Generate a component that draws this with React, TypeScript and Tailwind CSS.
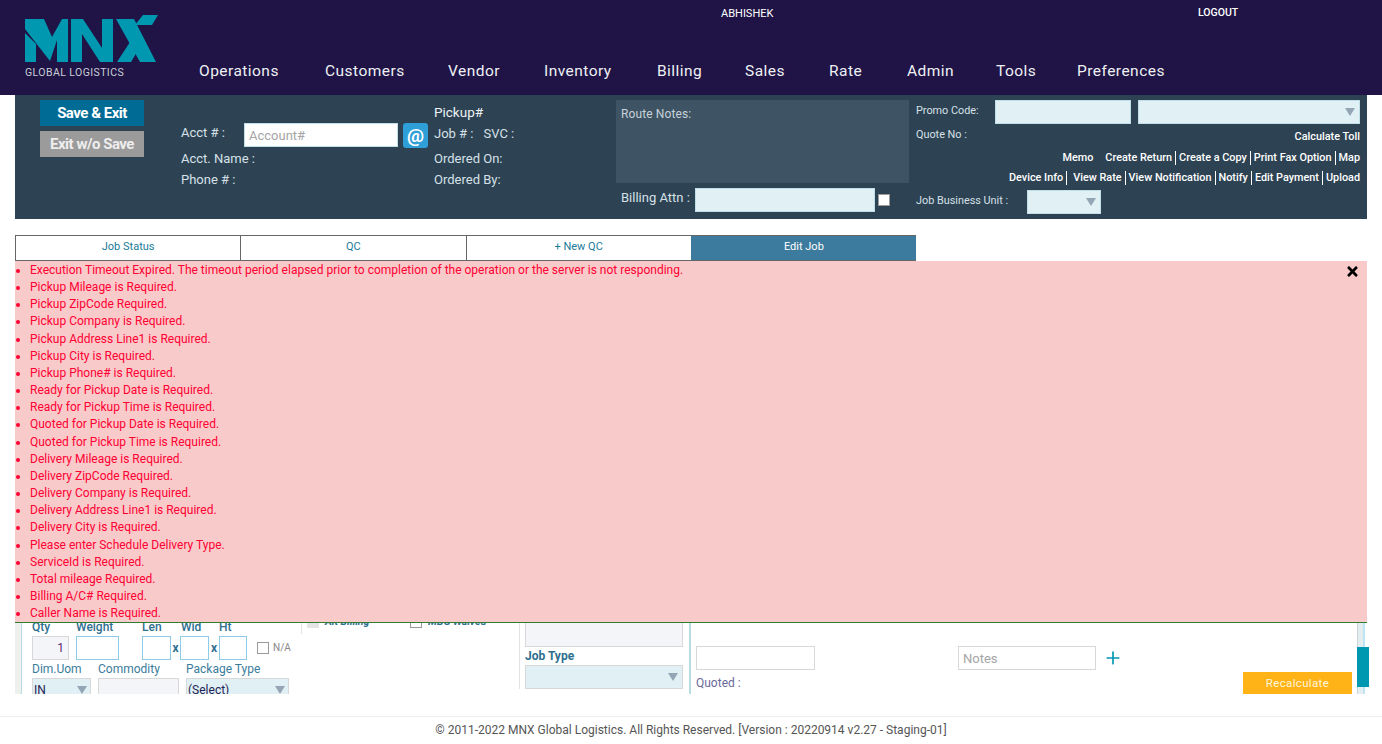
import { Plus } from "lucide-react";
import { FaTimes } from "react-icons/fa";

const navItems = [
  { label: "Operations", width: "w-[82px]" },
  { label: "Customers", width: "w-[79px]" },
  { label: "Vendor", width: "w-[52px]" },
  { label: "Inventory", width: "w-[69px]" },
  { label: "Billing", width: "w-[44px]" },
  { label: "Sales", width: "w-[40px]" },
  { label: "Rate", width: "w-[34px]" },
  { label: "Admin", width: "w-[45px]" },
  { label: "Tools", width: "w-[37px]" },
  { label: "Preferences", width: "w-[91px]" },
];

const errors = [
  "Execution Timeout Expired. The timeout period elapsed prior to completion of the operation or the server is not responding.",
  "Pickup Mileage is Required.",
  "Pickup ZipCode Required.",
  "Pickup Company is Required.",
  "Pickup Address Line1 is Required.",
  "Pickup City is Required.",
  "Pickup Phone# is Required.",
  "Ready for Pickup Date is Required.",
  "Ready for Pickup Time is Required.",
  "Quoted for Pickup Date is Required.",
  "Quoted for Pickup Time is Required.",
  "Delivery Mileage is Required.",
  "Delivery ZipCode Required.",
  "Delivery Company is Required.",
  "Delivery Address Line1 is Required.",
  "Delivery City is Required.",
  "Please enter Schedule Delivery Type.",
  "ServiceId is Required.",
  "Total mileage Required.",
  "Billing A/C# Required.",
  "Caller Name is Required.",
];

const tabs = ["Job Status", "QC", "+ New QC"];

const linksTop = ["Create Return", "Create a Copy", "Print Fax Option"];
const linksBottom = ["View Rate", "View Notification", "Notify", "Edit Payment"];

const Caret = ({ className = "" }: { className?: string }) => (
  <span className={`block h-0 w-0 border-x-[5px] border-t-[8px] border-x-transparent border-t-[#94a5b5] ${className}`} />
);

const Logo = () => (
  <svg viewBox="25 15 134 47" className="block h-[47px] w-[134px]" fill="#0097b0">
    <path d="M25 19H44L52 37L62 19H68V62H57V40L50 61L25 29Z" />
    <path d="M25 33L36 44V62H25Z" />
    <path d="M71 19H83L102 48V19H113V62H100L82 34V62H71Z" />
    <path d="M116 19H134L156 62H140Z" />
    <path d="M117 62L130 42L137 52L131 62Z" />
    <path d="M143 15H158L152 25H135Z" />
  </svg>
);

export default function App() {
  return (
    <div className="flex min-h-[744px] flex-col bg-white font-['Roboto',sans-serif]">
      <header className="flex h-[95px] bg-[#1f1445]">
        <div className="ml-[25px] w-[174px] pt-[15px]">
          <Logo />
          <div className="mt-[4px] pt-[1px] text-[10.5px] leading-[12px] tracking-[0.04em] text-[#c9cdd6]">GLOBAL LOGISTICS</div>
        </div>
        <div className="flex flex-1 flex-col">
          <div className="flex h-[24px] pt-[6px] text-[11px] leading-[13px] text-white">
            <span className="ml-[522px] w-[477px] pt-[1px]">ABHISHEK</span>
            <span className="text-[10.5px] font-medium">LOGOUT</span>
          </div>
          <nav className="mt-[37px] flex gap-[44px] text-[15.5px] leading-[20px] tracking-[0.03em] text-[#eef0f4]">
            {navItems.map((item) => (
              <span key={item.label} className={`${item.width} whitespace-nowrap`}>
                {item.label}
              </span>
            ))}
          </nav>
        </div>
      </header>

      <main className="px-[15px]">
        <section className="flex h-[124px] bg-[#2d4353] text-[13px] leading-[21px] text-[#d6e0e8]">
          <div className="ml-[25px] flex w-[104px] flex-col gap-[5px] pt-[5px] text-center text-[15px] font-bold leading-[26px] tracking-[-0.033em]">
            <div className="h-[26px] bg-[#006b94] text-white">Save &amp; Exit</div>
            <div className="h-[26px] bg-[#9b9b9b] text-[#eeeeee]">Exit w/o Save</div>
          </div>

          <div className="ml-[37px] w-[253px] pt-[28px]">
            <div className="flex h-[25px] items-start">
              <span className="w-[63px] leading-[19px]">Acct # :</span>
              <input
                placeholder="Account#"
                className="h-[24px] w-[154px] border border-[#bfe0e6] bg-white px-[4px] text-[13px] text-black placeholder:text-[#a5a5a5]"
              />
              <span className="ml-[5px] flex h-[25px] w-[25px] items-center justify-center rounded-[3px] bg-[#2f9fd8] text-[19px] font-bold text-white">
                @
              </span>
            </div>
            <div>Acct. Name :</div>
            <div>Phone # :</div>
          </div>

          <div className="w-[182px] pt-[7px]">
            <div className="h-[21px] text-[13.5px] text-[#eef2f5]">Pickup#</div>
            <div className="mb-[4px] flex h-[21px] gap-[10px]">
              <span>Job # :</span>
              <span>SVC :</span>
            </div>
            <div>Ordered On:</div>
            <div>Ordered By:</div>
          </div>

          <div className="w-[293px] pt-[5px]">
            <div className="h-[83px] bg-[#3e5464] px-[5px] py-[4px] text-[12px] leading-[20px] tracking-[0.01em] text-[#c8d2da]">Route Notes:</div>
            <div className="mt-[5px] flex items-center pl-[5px]">
              <span className="w-[74px] -translate-y-[3px]">Billing Attn :</span>
              <span className="h-[24px] w-[180px] border border-[#bfe0e6] bg-[#e1f0f4]" />
              <span className="ml-[3px] h-[12px] w-[12px] border border-[#9a9a9a] bg-white" />
            </div>
          </div>

          <div className="ml-[7px] w-[444px] pt-[5px] text-[10.85px]">
            <div className="flex h-[24px] items-center">
              <span className="w-[79px] -translate-y-[2px]">Promo Code:</span>
              <span className="h-[24px] w-[136px] border border-[#bfe0e6] bg-[#e1f0f4]" />
              <span className="ml-[7px] flex h-[24px] w-[222px] items-center justify-end border border-[#bfe0e6] bg-[#e1f0f4] pr-[4px]">
                <Caret />
              </span>
            </div>
            <div className="flex h-[23px] items-center justify-between">
              <span className="-translate-y-[1px]">Quote No :</span>
              <span className="translate-y-[1px] font-medium text-white">Calculate Toll</span>
            </div>
            <div className="flex h-[20px] translate-y-[1px] items-center justify-end font-medium leading-[14px] text-white">
              <span className="mr-[12px]">Memo</span>
              {linksTop.map((link) => (
                <span key={link} className="mr-[3px] border-r border-white pr-[3px]">
                  {link}
                </span>
              ))}
              <span>Map</span>
            </div>
            <div className="flex h-[20px] translate-y-[1px] items-center justify-end font-medium leading-[14px] text-white">
              <span className="mr-[6px] border-r border-white pr-[3px]">Device Info</span>
              {linksBottom.map((link) => (
                <span key={link} className="mr-[3px] border-r border-white pr-[3px]">
                  {link}
                </span>
              ))}
              <span>Upload</span>
            </div>
            <div className="mt-[3px] flex h-[24px] items-center">
              <span className="w-[111px] -translate-y-[2px]">Job Business Unit :</span>
              <span className="flex h-[24px] w-[74px] items-center justify-end border border-[#bfe0e6] bg-[#e1f0f4] pr-[4px]">
                <Caret />
              </span>
            </div>
          </div>
        </section>

        <div className="mt-[16px] flex h-[26px] w-[901px] text-center text-[11px] leading-[22px]">
          {tabs.map((tab) => (
            <div key={tab} className="flex-1 border-y border-l border-[#666666] text-[#1a7a9a]">
              {tab}
            </div>
          ))}
          <div className="flex-1 border-y border-l border-[#666666] border-l-[#3c7a9e] bg-[#3c7a9e] text-white">Edit Job</div>
        </div>

        <div className="relative h-[362px] border-b border-[#2e7d32] bg-[#f9caca] pt-[1px] text-[12px] leading-[17.15px] text-[#ff0033]">
          <ul className="list-disc pl-[15px] marker:text-[#ff0033]">
            {errors.map((msg) => (
              <li key={msg}>{msg}</li>
            ))}
          </ul>
          <FaTimes className="absolute right-[7px] top-[3px] text-[15px] text-black" />
        </div>

        <section className="flex h-[71px] text-[12px] leading-[16px]">
          <div className="w-[6px] bg-[#eef0ee]" />
          <div className="w-[1px] bg-[#b7dde3]" />

          <div className="ml-[10px] w-[269px] overflow-hidden">
            <div className="flex h-[13px] font-medium leading-[9px] text-[#2f6f8f]">
              <span className="w-[44px]">Qty</span>
              <span className="w-[66px]">Weight</span>
              <span className="w-[39px]">Len</span>
              <span className="w-[38px]">Wid</span>
              <span>Ht</span>
            </div>
            <div className="flex h-[24px] items-center">
              <span className="h-[24px] w-[37px] border border-[#d8d8d8] bg-[#f3f5f9] pr-[4px] pt-[3px] text-right text-[#5f2a6f]">1</span>
              <span className="ml-[7px] h-[24px] w-[43px] border border-[#8ccbe9]" />
              <span className="ml-[23px] h-[24px] w-[29px] border border-[#8ccbe9]" />
              <span className="w-[9px] text-center font-bold text-[#2f6f8f]">x</span>
              <span className="h-[24px] w-[29px] border border-[#8ccbe9]" />
              <span className="w-[10px] text-center font-bold text-[#2f6f8f]">x</span>
              <span className="h-[24px] w-[28px] border border-[#8ccbe9]" />
              <span className="ml-[10px] h-[12px] w-[12px] border border-[#9a9a9a]" />
              <span className="ml-[4px] text-[10px] text-[#888888]">N/A</span>
            </div>
            <div className="flex h-[18px] items-center text-[#3b7c9c]">
              <span className="w-[66px]">Dim.Uom</span>
              <span className="w-[88px]">Commodity</span>
              <span>Package Type</span>
            </div>
            <div className="flex text-[#222255]">
              <span className="flex h-[24px] w-[59px] justify-between border border-[#d8d8d8] bg-[#e1f0f4] px-[1px] pr-[3px] pt-[3px]">
                IN
                <Caret className="mt-[4px]" />
              </span>
              <span className="ml-[7px] h-[24px] w-[81px] border border-[#d8d8d8] bg-[#f3f5f9]" />
              <span className="ml-[7px] flex h-[24px] w-[103px] justify-between border border-[#d8d8d8] bg-[#e1f0f4] px-[1px] pr-[3px] pt-[3px]">
                (Select)
                <Caret className="mt-[4px]" />
              </span>
            </div>
          </div>

          <div className="h-[11px] w-[1px] bg-[#e3e3e3]" />
          <div className="w-[217px] overflow-hidden pl-[5px]">
            <div className="-mt-[7px] flex h-[12px] items-center text-[10.5px] font-bold italic text-[#2f6f8f]">
              <span className="h-[12px] w-[12px] bg-[#e5e5e5]" />
              <span className="ml-[6px] w-[85px]">Alt Billing</span>
              <span className="h-[12px] w-[12px] border border-[#9a9a9a]" />
              <span className="ml-[6px]">MBG Waived</span>
            </div>
          </div>

          <div className="h-[66px] w-[1px] bg-[#e3e3e3]" />
          <div className="ml-[5px] w-[158px]">
            <div className="h-[24px] border-x border-b border-[#d8d8d8] bg-[#f3f5f9]" />
            <div className="mt-[1px] h-[17px] font-bold leading-[17px] text-[#2f6f8f]">Job Type</div>
            <div className="flex h-[24px] items-center justify-end border border-[#d8d8d8] bg-[#e1f0f4] pr-[4px]">
              <Caret />
            </div>
          </div>

          <div className="ml-[6px] w-[2px] bg-[#b7dde3]" />

          <div className="ml-[5px] flex-1">
            <div className="mt-[23px] flex items-center">
              <span className="h-[24px] w-[119px] border border-[#d8d8d8]" />
              <input
                placeholder="Notes"
                className="ml-[143px] h-[24px] w-[138px] border border-[#d8d8d8] px-[4px] text-[13px] placeholder:text-[#a5a5a5]"
              />
              <Plus className="ml-[7px] h-[20px] w-[20px] text-[#0097b0]" strokeWidth={2} />
            </div>
            <div className="flex items-start justify-between">
              <span className="pt-[5px] text-[#6a6a9a]">Quoted :</span>
              <span className="mt-[2px] h-[22px] w-[109px] bg-[#ffb316] text-center text-[11.5px] leading-[22px] tracking-[0.03em] text-[#fff6dd]">
                Recalculate
              </span>
            </div>
          </div>

          <div className="relative ml-[5px] mr-[2px] w-[8px] border-l border-[#c9d5d8] bg-[#e4eef0]">
            <div className="absolute right-0 top-0 h-full w-[2px] bg-[#bfe5f2]" />
            <div className="absolute left-[-1px] top-[24px] h-[40px] w-[12px] bg-[#0097b0]" />
          </div>
        </section>
      </main>

      <footer className="mt-[22px] h-[28px] border-t border-[#eceef4] text-center text-[12px] leading-[26px] text-[#555555]">
        © 2011-2022 MNX Global Logistics. All Rights Reserved. [Version : 20220914 v2.27 - Staging-01]
      </footer>
    </div>
  );
}
